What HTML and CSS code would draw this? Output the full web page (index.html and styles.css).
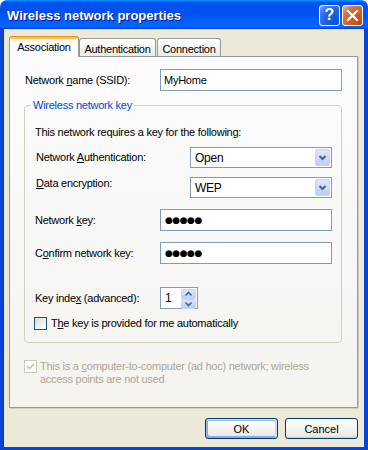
FILE: index.html
```html
<!DOCTYPE html>
<html lang="en">
<head>
    <meta charset="UTF-8">
    <meta name="viewport" content="width=device-width, initial-scale=1.0">
    <title>Wireless network properties</title>
    <link rel="stylesheet" href="styles.css">
</head>
<body>
    <div class="window">
        <div class="titlebar">
            <span class="title">Wireless network properties</span>
            <div class="title-controls">
                <button class="ctl help">?</button>
                <button class="ctl close">
                    <svg width="19" height="19" viewBox="0 0 19 19">
                        <path d="M5 5 L14 14 M14 5 L5 14" stroke="#fff" stroke-width="2.2" stroke-linecap="square"/>
                    </svg>
                </button>
            </div>
        </div>

        <div class="frame">
            <div class="tabs">
                <div class="tab active">Association</div>
                <div class="tab tab-auth">Authentication</div>
                <div class="tab tab-conn">Connection</div>
            </div>

            <div class="panel">
                <div class="row name-row">
                    <label class="lbl lbl-wide">Network <u>n</u>ame (SSID):</label>
                    <div class="textbox name-box">MyHome</div>
                </div>

                <fieldset class="group">
                    <legend>Wireless network key</legend>
                    <p class="intro">This network requires a key for the following:</p>

                    <div class="row sel-row">
                        <label class="lbl lbl-sel">Network <u>A</u>uthentication:</label>
                        <div class="combo">
                            <span class="combo-text">Open</span>
                            <span class="drop">
                                <svg width="13" height="17" viewBox="0 0 13 17"><path d="M3.5 7 L6.5 10 L9.5 7" fill="none" stroke="#4d6185" stroke-width="2"/></svg>
                            </span>
                        </div>
                    </div>

                    <div class="row sel-row sel-row-2">
                        <label class="lbl lbl-sel lbl-top"><u>D</u>ata encryption:</label>
                        <div class="combo">
                            <span class="combo-text">WEP</span>
                            <span class="drop">
                                <svg width="13" height="17" viewBox="0 0 13 17"><path d="M3.5 7 L6.5 10 L9.5 7" fill="none" stroke="#4d6185" stroke-width="2"/></svg>
                            </span>
                        </div>
                    </div>

                    <div class="row key-row">
                        <label class="lbl lbl-key">Network <u>k</u>ey:</label>
                        <div class="textbox key-box"><span class="dots">●●●●●</span></div>
                    </div>

                    <div class="row key-row key-row-2">
                        <label class="lbl lbl-key">C<u>o</u>nfirm network key:</label>
                        <div class="textbox key-box"><span class="dots">●●●●●</span></div>
                    </div>

                    <div class="row index-row">
                        <label class="lbl lbl-key">Key inde<u>x</u> (advanced):</label>
                        <div class="textbox spin-box">
                            <span class="spin-value">1</span>
                            <span class="spin">
                                <span class="spin-btn">
                                    <svg width="13" height="8" viewBox="0 0 13 8"><path d="M3.5 5.5 L6.5 2.5 L9.5 5.5" fill="none" stroke="#4d6185" stroke-width="1.6"/></svg>
                                </span>
                                <span class="spin-btn">
                                    <svg width="13" height="8" viewBox="0 0 13 8"><path d="M3.5 2.5 L6.5 5.5 L9.5 2.5" fill="none" stroke="#4d6185" stroke-width="1.6"/></svg>
                                </span>
                            </span>
                        </div>
                    </div>

                    <div class="check-row auto-row">
                        <span class="checkbox"></span>
                        <span class="check-label">T<u>h</u>e key is provided for me automatically</span>
                    </div>
                </fieldset>

                <div class="check-row adhoc-row">
                    <span class="checkbox checked">
                        <svg width="11" height="11" viewBox="0 0 11 11"><path d="M2 5 L4.5 7.5 L9 3" fill="none" stroke="#cac8bb" stroke-width="2"/></svg>
                    </span>
                    <span class="check-label">This is a <u>c</u>omputer-to-computer (ad hoc) network; wireless<br>access points are not used</span>
                </div>
            </div>

            <div class="buttons">
                <button class="btn btn-default">OK</button>
                <button class="btn">Cancel</button>
            </div>
        </div>
    </div>
</body>
</html>
```

FILE: styles.css
```css
body {
    margin: 0;
    background-color: #fff;
    font-family: "Liberation Sans", Arial, sans-serif;
    font-size: 11px;
    letter-spacing: -0.25px;
    color: #000;
}

.window {
    width: 368px;
    height: 450px;
    display: flex;
    flex-direction: column;
}

/* title bar */
.titlebar {
    height: 29px;
    flex: none;
    display: flex;
    align-items: center;
    justify-content: space-between;
    padding: 0 5px 0 7px;
    border-radius: 7px 7px 0 0;
    background: linear-gradient(180deg, #0997ff, #0053ee 8%, #0050ee 40%, #0066ff 88%, #0066ff 93%, #005bff 95%, #003dd7 96%, #003dd7);
    box-sizing: border-box;
}

.title {
    color: #fff;
    font-weight: bold;
    font-size: 13px;
    letter-spacing: 0;
    text-shadow: 1px 1px #0f1089;
    margin-top: 1px;
}

.title-controls {
    display: flex;
    gap: 2px;
    margin-top: 1px;
}

.ctl {
    width: 21px;
    height: 21px;
    padding: 0;
    border: 1px solid #fff;
    border-radius: 3px;
    display: flex;
    align-items: center;
    justify-content: center;
    box-sizing: border-box;
}

.help {
    background: radial-gradient(circle at 90% 90%, #0054e9, #2263d5 55%, #4480f5 80%, #87aaf6);
    color: #fff;
    font-family: "Liberation Sans", Arial, sans-serif;
    font-weight: bold;
    font-size: 16px;
    line-height: 1;
}

.close {
    background: radial-gradient(circle at 90% 90%, #cc4600, #dc6527 55%, #cd7546 70%, #f3b8a0);
}

/* window body */
.frame {
    flex: 1;
    display: flex;
    flex-direction: column;
    background-color: #ece9d8;
    border: solid #0843d8;
    border-width: 0 4px 3px 3px;
    padding: 7px 6px 0 6px;
    box-shadow: inset 1px 0 #0831d9;
}

.tabs {
    height: 20px;
    display: flex;
    align-items: flex-end;
    position: relative;
    z-index: 1;
}

.tab {
    height: 18px;
    box-sizing: border-box;
    display: flex;
    align-items: center;
    justify-content: center;
    border: 1px solid #919b9c;
    border-bottom: none;
    border-radius: 3px 3px 0 0;
    background: linear-gradient(180deg, #fff, #fafaf9 30%, #ecebe5);
    padding-top: 2px;
}

.tab.active {
    width: 70px;
    height: 21px;
    margin-bottom: -1px;
    border-top: none;
    background: linear-gradient(180deg, #e68b2c 0 1px, #ffc73c 1px 3px, #fcfcfe 3px);
    padding-top: 0;
}

.tab-auth {
    width: 77px;
}

.tab-conn {
    width: 64px;
    margin-left: 1px;
}

.panel {
    height: 352px;
    box-sizing: border-box;
    border: 1px solid #919b9c;
    background: linear-gradient(180deg, #fcfcfe, #f4f3ee);
    box-shadow: 1px 1px #d0cec1;
    padding: 12px 15px 0 15px;
}

.row {
    display: flex;
    align-items: center;
}

.lbl {
    flex: none;
    line-height: 13px;
}

.name-row {
    height: 22px;
}

.lbl-wide {
    width: 135px;
}

.textbox {
    height: 100%;
    box-sizing: border-box;
    border: 1px solid #7f9db9;
    background-color: #fff;
    padding: 0 3px;
    display: flex;
    align-items: center;
}

.name-box {
    width: 182px;
}

/* group box */
.group {
    margin: 8px 0 0 -1px;
    width: 318px;
    box-sizing: border-box;
    border: 1px solid #d0d0bf;
    border-radius: 4px;
    padding: 0 9px 12px 10px;
    min-width: 0;
}

.group legend {
    color: #0046d5;
    line-height: 13px;
    padding: 0 2px;
    margin-left: -4px;
}

.intro {
    margin: 14px 0 0;
    line-height: 13px;
}

.sel-row {
    height: 21px;
    margin-top: 8px;
}

.sel-row-2 {
    margin-top: 9px;
}

.lbl-sel {
    width: 154px;
    padding-left: 1px;
}

.lbl-top {
    align-self: flex-start;
}

.combo {
    width: 142px;
    height: 100%;
    box-sizing: border-box;
    border: 1px solid #7f9db9;
    background-color: #fff;
    display: flex;
    align-items: center;
    justify-content: space-between;
    padding: 1px;
}

.combo-text {
    padding-left: 3px;
    font-size: 12px;
}

.drop {
    width: 15px;
    height: 17px;
    box-sizing: border-box;
    border: 1px solid #c3d3fd;
    border-radius: 2px;
    background: linear-gradient(180deg, #dbe5fe, #bccefa);
    display: flex;
    align-items: center;
    justify-content: center;
}

.key-row {
    height: 22px;
    margin-top: 11px;
}

.lbl-key {
    width: 125px;
}

.key-box {
    width: 172px;
}

.dots {
    font-family: "DejaVu Sans", sans-serif;
    font-size: 9px;
    letter-spacing: -0.5px;
    padding-left: 1px;
}

.index-row {
    height: 22px;
    margin-top: 23px;
}

.spin-box {
    width: 38px;
    padding: 1px 1px 1px 4px;
    justify-content: space-between;
}

.spin-value {
    font-size: 12px;
}

.spin {
    width: 15px;
    height: 100%;
    display: flex;
    flex-direction: column;
}

.spin-btn {
    flex: 1;
    box-sizing: border-box;
    border: 1px solid #c3d3fd;
    border-radius: 2px;
    background: linear-gradient(180deg, #dbe5fe, #bccefa);
    display: flex;
    align-items: center;
    justify-content: center;
}

/* check boxes */
.check-row {
    display: flex;
    align-items: flex-start;
}

.auto-row {
    margin-top: 8px;
    margin-left: -1px;
}

.checkbox {
    flex: none;
    width: 13px;
    height: 13px;
    box-sizing: border-box;
    border: 1px solid #1c5180;
    background: linear-gradient(135deg, #dcdcd7, #fff);
    display: flex;
    align-items: center;
    justify-content: center;
}

.check-label {
    line-height: 13px;
    margin-left: 4px;
    white-space: nowrap;
}

.adhoc-row {
    margin-top: 17px;
    margin-left: -1px;
    color: #aca899;
}

.adhoc-row .checkbox {
    border-color: #cac8bb;
    background: #fff;
}

.adhoc-row .check-label {
    margin-left: 3px;
}

/* dialog buttons */
.buttons {
    display: flex;
    justify-content: flex-end;
    gap: 7px;
    margin-top: 10px;
}

.btn {
    width: 73px;
    height: 21px;
    padding: 0;
    border: 1px solid #003c74;
    border-radius: 3px;
    background: linear-gradient(180deg, #fff, #ecebe6 86%, #d6d0c5);
    font-family: "Liberation Sans", Arial, sans-serif;
    font-size: 11px;
    color: #000;
}

.btn-default {
    box-shadow: inset -1px 1px #cee7ff, inset 1px 2px #98b8ea, inset -2px 2px #bcd4f6, inset 1px -1px #89ade4, inset 2px -2px #89ade4;
}
```
